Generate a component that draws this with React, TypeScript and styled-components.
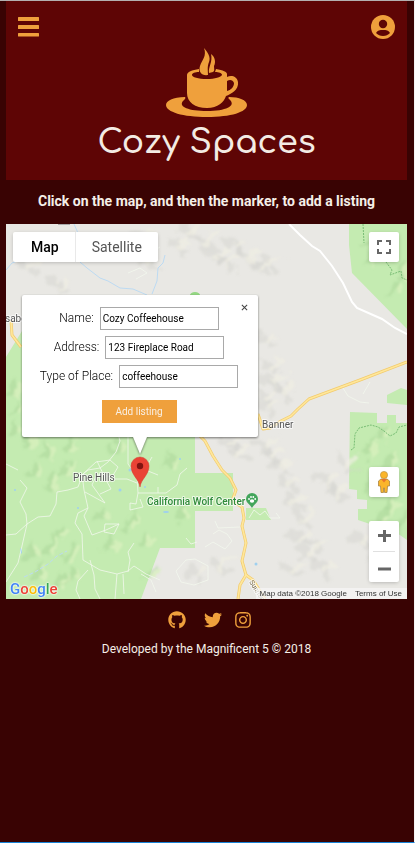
import React from "react";
import styled, { createGlobalStyle } from "styled-components";
import { FaGithub, FaTwitter, FaInstagram } from "react-icons/fa";

const GlobalStyle = createGlobalStyle`
  *, *::before, *::after { box-sizing: border-box; }
  html, body, #root { height: 100%; }
  body {
    margin: 0;
    background: #390303;
    color: #f5efe8;
    font-family: Roboto, "Liberation Sans", sans-serif;
  }
  button { font-family: inherit; cursor: pointer; }
`;

const Page = styled.div`
  min-height: 100%;
  display: flex;
  flex-direction: column;
  padding: 0 7px 0 6px;
  border-top: 1px solid #b4b0b0;
  border-right: 1px solid #f4f4f4;
  border-bottom: 1px solid #1883d7;
`;

const Header = styled.header`
  display: flex;
  flex-direction: column;
  padding: 12px 12px 16px;
  background: #5e0505;
`;

const Toolbar = styled.div`
  display: flex;
  justify-content: space-between;
  align-items: center;
  height: 27px;
`;

const IconButton = styled.button`
  display: flex;
  padding: 0;
  border: 0;
  background: none;
  color: #efa03c;
`;

const Brand = styled.div`
  display: flex;
  flex-direction: column;
  align-items: center;
  padding-top: 8px;
`;

const BrandName = styled.h1`
  margin: 4px 0 0;
  font: 600 33px/42px Comfortaa, Quicksand, Inter, sans-serif;
  color: #f3ece4;
  white-space: nowrap;
`;

const Hint = styled.h2`
  margin: 0;
  font-size: 14px;
  line-height: 20px;
  padding: 11px 0 13px;
  text-align: center;
`;

const MapArea = styled.main`
  position: relative;
  height: 375px;
  overflow: hidden;
  background: #e9e8e4;
`;

const MapDrawing = styled.svg`
  display: block;
  width: 100%;
  height: 100%;
`;

const MapTypes = styled.div`
  position: absolute;
  top: 8px;
  left: 7px;
  display: flex;
  background: #fff;
  border-radius: 2px;
  box-shadow: 0 1px 4px -1px rgba(0, 0, 0, 0.3);
`;

const MapType = styled.button<{ $active?: boolean }>`
  height: 30px;
  padding: 0 16px 0 18px;
  border: 0;
  background: none;
  font-size: 14px;
  font-weight: ${(p) => (p.$active ? 500 : 400)};
  color: ${(p) => (p.$active ? "#000" : "#565656")};
  & + & { border-left: 1px solid #e9e9e9; padding: 0 16px; }
`;

const Controls = styled.div<{ $top?: boolean }>`
  position: absolute;
  right: 8px;
  ${(p) => (p.$top ? "top: 8px;" : "bottom: 17px;")}
  display: flex;
  flex-direction: column;
  gap: 24px;
`;

const ControlCard = styled.div`
  width: 30px;
  display: flex;
  flex-direction: column;
  align-items: center;
  background: #fff;
  border-radius: 2px;
  box-shadow: 0 1px 4px -1px rgba(0, 0, 0, 0.3);
`;

const ControlButton = styled.button`
  display: flex;
  align-items: center;
  justify-content: center;
  width: 30px;
  height: 30px;
  padding: 0;
  border: 0;
  background: none;
`;

const Divider = styled.div`
  width: 22px;
  height: 1px;
  background: #e0e0e0;
`;

const Popup = styled.form`
  position: absolute;
  left: 16px;
  top: 71px;
  width: 236px;
  display: flex;
  flex-direction: column;
  align-items: center;
  gap: 6px;
  padding: 12px 11px 14px 9px;
  background: #fff;
  border-radius: 2px;
  filter: drop-shadow(0 1px 1px rgba(0, 0, 0, 0.5));
  &::after {
    content: "";
    position: absolute;
    top: 100%;
    left: 50%;
    margin-left: -7px;
    border: 7px solid transparent;
    border-bottom: 0;
    border-top: 17px solid #fff;
  }
`;

const Field = styled.label`
  display: flex;
  gap: 6px;
  font-size: 12px;
  line-height: 22px;
  font-weight: 300;
  color: #000;
  white-space: nowrap;
`;

const TextInput = styled.input`
  width: 119px;
  height: 23px;
  padding: 0 2px;
  border: 1px solid #a9a9a9;
  border-radius: 0;
  background: #fff;
  color: #000;
  font: 400 10px Roboto, sans-serif;
`;

const Submit = styled.button`
  width: 75px;
  height: 23px;
  margin-top: 6px;
  padding: 0;
  border: 0;
  background: #efa03c;
  color: #f8efe4;
  font-size: 10px;
`;

const Close = styled.button`
  position: absolute;
  top: 9px;
  right: 10px;
  display: flex;
  padding: 0;
  border: 0;
  background: none;
`;

const Attribution = styled.div`
  position: absolute;
  right: 0;
  bottom: 0;
  display: flex;
  gap: 8px;
  padding: 0 5px 0 4px;
  background: rgba(245, 245, 245, 0.75);
  font-family: "Liberation Sans", sans-serif;
  font-size: 8px;
  line-height: 11px;
  color: #333;
  a { color: inherit; text-decoration: none; }
`;

const GoogleMark = styled.a`
  position: absolute;
  left: 4px;
  bottom: 0;
  font: 500 15px/20px Roboto, sans-serif;
  text-decoration: none;
  text-shadow: 0 0 1px #fff, 0 0 2px #fff, 0 0 2px #fff;
`;

const Letter = styled.span<{ $color: string }>`
  color: ${(p) => p.$color};
`;

const Footer = styled.footer`
  display: flex;
  flex-direction: column;
  align-items: center;
  gap: 11px;
  padding-top: 12px;
  font-size: 12px;
  line-height: 18px;
`;

const Socials = styled.nav`
  display: flex;
  gap: 12px;
  padding-left: 6px;
  a { display: flex; color: #efa03c; }
  a:first-child { margin-right: 6px; }
`;

const localRoads = [
  "M6 535 L16 534 L27 524 L38 517 L50 516 L56 504 L57 492 L68 490 L78 487 L83 474 L88 470 L100 468 L108 462 L116 452 L120 441 L119 437",
  "M27 524 L22 546 L18 563 L6 582",
  "M20 480 L27 488 L20 502 L26 514 L27 524",
  "M82 474 L84 490 L88 508 L78 513 L75 523 L82 534 L83 560 L100 570 L117 574 L128 571 L134 566 L146 574 L160 580",
  "M88 508 L84 516 L92 535 L106 530 L119 524 L114 534 L104 532 L105 524 L119 524",
  "M88 570 L78 581 L76 590 L80 599",
  "M90 560 L94 575 L95 589 L100 599",
  "M117 574 L115 599 M123 574 L124 594",
  "M128 572 L130 560 L128 552 L134 543",
  "M83 474 L96 462 L110 460 L118 467 L112 477 L97 474 L92 485 L105 503 L85 492",
  "M97 461 L106 480 L111 489 L100 494",
  "M128 437 L128 464 L137 476 L138 493 L166 493 L177 485 L180 474 L187 468",
  "M111 479 L127 479 L137 483 M158 493 L158 487",
  "M138 493 L136 504 L130 503 L130 510 L143 507 L140 499",
  "M148 471 L158 475 M152 457 L148 464",
  "M186 538 L191 544 L197 542",
  "M186 560 L195 559 L208 566 L208 580 L194 585 L181 582 L176 571 Z",
  "M213 534 L219 530 L227 534 L232 541 L225 549 L213 542 L205 547",
  "M215 521 L218 528 L240 527",
  "M249 518 L254 510 L260 515 L265 511 L270 518 L280 518 L276 513",
  "M343 388 L348 396 L360 402 L369 403 M363 394 L370 382",
  "M6 464 L18 470 M141 574 L151 580 L156 592",
];

const highways = [
  "M407 362 L360 380 L309 399 L298 409 L291 416 L281 421 L270 428 L263 429 L258 414",
  "M198 434 L205 441 L213 456 L222 470 L230 478 L236 490 L232 501 L242 507 L244 518 L242 526 L246 543 L242 561 L246 575 L240 585 L238 599",
  "M246 575 L253 580 L265 599",
  "M11 320 L12 335 L21 347",
];

const ridges = [
  [205, 240], [214, 255], [226, 263], [235, 246], [248, 257], [260, 268], [270, 263],
  [188, 230], [178, 247], [142, 238], [128, 248], [148, 259], [58, 286], [28, 266],
  [265, 340], [270, 365], [275, 382], [264, 397], [282, 391], [268, 408],
  [263, 446], [272, 455], [280, 466], [287, 484], [294, 502], [303, 519], [299, 537],
  [306, 554], [315, 544], [292, 568], [336, 492], [326, 482], [360, 540], [380, 558],
  [238, 452], [229, 443], [345, 463], [322, 569], [220, 565], [196, 575],
];

const greenHills = [
  [24, 440], [42, 450], [66, 444], [29, 470], [47, 481], [61, 470], [112, 445],
  [46, 545], [58, 533], [67, 552], [29, 551], [36, 572], [56, 580], [69, 574],
  [98, 514], [126, 521], [144, 538], [168, 460], [178, 514], [148, 572], [106, 544],
  [10, 388], [14, 406], [12, 428], [365, 449], [385, 460], [378, 434], [369, 479],
  [386, 504], [400, 520], [380, 515], [366, 260], [391, 286], [398, 270], [366, 240],
];

function Terrain() {
  return (
    <MapDrawing viewBox="6 224 401 375" preserveAspectRatio="xMinYMin slice" role="img" aria-label="Map of Pine Hills and Banner">
      <defs>
        <filter id="soft" x="-10%" y="-10%" width="120%" height="120%">
          <feTurbulence type="fractalNoise" baseFrequency="0.07" numOctaves="3" seed="4" result="n" />
          <feDisplacementMap in="SourceGraphic" in2="n" scale="18" xChannelSelector="R" yChannelSelector="G" result="d" />
          <feGaussianBlur in="d" stdDeviation="1.2" />
        </filter>
      </defs>
      <rect x="6" y="224" width="401" height="375" fill="#e9e8e4" />
      <g fill="#c4ebb1">
        <path d="M22 331 L6 357 V599 H141 L160 548 H195 V511 H233 V473 H195 V400 H140 V331Z" />
        <path d="M246 508 H266 L271 520 H246Z" />
        <path d="M349 224 L349 245 L352 273 L407 329 V224Z" />
        <path d="M350 412 L377 413 V423 H387 V415 H396 V423 H407 V540 L397 533 L358 520 V509 H367 V500 L357 499 V490 L349 489Z" />
        <path d="M387 395 L401 388 L407 390 V405 L387 403Z" />
        <ellipse cx="195" cy="295" rx="5" ry="3" fill="#94d783" />
      </g>
      <g filter="url(#soft)">
        {ridges.map(([x, y], i) => (
          <React.Fragment key={i}>
            <path d={`M${x - 10} ${y - 9} l11 4 l5 7 l7 5 l-9 3 l-6 -7 l-9 -3Z`} fill="#d2d2cf" opacity="0.45" />
            <path d={`M${x + 7} ${y - 9} l7 3 l-7 5 l-6 7 l-3 -4Z`} fill="#f0eee2" opacity="0.7" />
          </React.Fragment>
        ))}
        {greenHills.map(([x, y], i) => (
          <React.Fragment key={i}>
            <path d={`M${x - 5} ${y + 8} l6 -10 l5 -8 l2 10 l-5 7Z`} fill="#a9d598" opacity="0.5" />
            <path d={`M${x + 4} ${y + 4} l6 -10 l3 6 l-5 8Z`} fill="#d8f0bd" opacity="0.8" />
          </React.Fragment>
        ))}
      </g>
      <rect x="58" y="223" width="12" height="2" fill="#aaa" />
      <g fill="none" stroke="#bcdaf2" strokeWidth="1">
        <path d="M74 224 L78 233 L76 246 L80 262 L87 268 L100 278 L108 281 L120 288 L133 289 L147 295" />
        <path d="M165 255 L163 263 L158 268 L157 281 L152 294" />
        <path d="M6 270 L12 263 L20 260" />
        <path d="M24 577 L35 572 L48 564 L57 556 L67 551" strokeDasharray="4 2" />
      </g>
      <g fill="#9fd0ef">
        <circle cx="120" cy="490" r="1.5" /><circle cx="145" cy="487" r="1" /><circle cx="180" cy="459" r="1" />
        <circle cx="78" cy="508" r="1" /><circle cx="15" cy="490" r="1" /><circle cx="256" cy="564" r="1.5" />
        <ellipse cx="166" cy="512" rx="3" ry="1" /><ellipse cx="21" cy="551" rx="1" ry="3" /><circle cx="130" cy="470" r="1.5" />
      </g>
      <g fill="none" stroke="#f3f8ed" strokeWidth="0.8" strokeLinejoin="round">
        {localRoads.map((d) => <path key={d} d={d} />)}
        <path d="M128 273 L140 268 L147 273 L136 279 M128 238 L145 243 L150 253 L160 247" />
      </g>
      <path d="M289 224 L300 235 L312 246 L320 251 L332 266 L343 283 L352 302 L357 308 L382 319 L395 328 L407 334" fill="none" stroke="#fff" strokeWidth="2" />
      <g fill="none" strokeLinejoin="round">
        {highways.map((d) => <path key={d} d={d} stroke="#f2cb6c" strokeWidth="3" />)}
        {highways.map((d) => <path key={d} d={d} stroke="#ffe79b" strokeWidth="1.6" />)}
      </g>
      <g fill="none" stroke="#79bd75" strokeWidth="1" strokeDasharray="2 1">
        <path d="M351 450 L354 448 L355 434 L359 428 L371 425 L378 427 L384 431 L390 436 L396 433 L399 427 L407 425" />
        <path d="M363 224 L364 243 M386 262 L392 270 L390 275 L401 271 L402 278 L407 280" />
      </g>
      <g fontFamily="Roboto, sans-serif" fontSize="10" fill="#555" stroke="#fff" strokeWidth="2" strokeOpacity="0.7" paintOrder="stroke" strokeLinejoin="round">
        <text x="5" y="322">sabe</text>
        <text x="73" y="481">Pine Hills</text>
        <text x="262" y="428">Banner</text>
        <text x="147" y="505" fill="#2f8a3a" fontWeight="500">California Wolf Center</text>
        <text transform="translate(249 582) rotate(58)" fontSize="7" fill="#71633f">Sunrise</text>
      </g>
      <path d="M252 508 c-2 -4 -6 -5 -6 -9 a6 6 0 0 1 12 0 c0 4 -4 5 -6 9Z" fill="#43a55b" />
      <g fill="#fff">
        <ellipse cx="252" cy="501" rx="2.2" ry="1.7" />
        <circle cx="249" cy="499" r="0.9" /><circle cx="251" cy="497" r="0.9" />
        <circle cx="253.3" cy="497" r="0.9" /><circle cx="255.2" cy="499" r="0.9" />
      </g>
      <path d="M140 487 c-1 -8 -9 -12 -9 -21 a9 9 0 0 1 18 0 c0 9 -8 13 -9 21Z" fill="#ea4335" stroke="#d33b2f" strokeWidth="0.5" />
      <circle cx="140" cy="466" r="3.2" fill="#811411" />
    </MapDrawing>
  );
}

function CupLogo() {
  return (
    <svg width="82" height="70" viewBox="0 0 82 70" fill="#efa03c" aria-hidden="true">
      <path d="M38 0 C42 5 45 9 43 14 C41 19 42 22 42 27 C36 28 32 24 34 18 C36 12 41 8 38 0Z" />
      <path d="M45 6 C49 9 50 14 48 18 C48 21 49 23 47 24 L43 25 C42 19 47 14 45 6Z" />
      <path fillRule="evenodd" d="M33 21 C26 22 21 24 21 27 V45 C21 54 29 60 41 60 C52 60 58 54 60 48 C65 46 73 42 72 34 C71 28 65 27 61 29 V26 C61 24 57 22 50 21 L49 24 C53 24 56 25 56 27 C55 29 49 31 41 31 C32 31 26 29 26 27 C26 25 29 24 33 24Z M61 33 C64 31 67 32 68 35 C68 39 65 42 61 43Z" />
      <path d="M19 49 C7 49 0 53 0 57 C0 64 17 69 41 69 C65 69 81 64 81 57 C81 52 73 49 63 49 C62 50 62 50 64 52 C70 58 60 63 41 63 C23 63 12 59 17 53 C19 51 20 50 19 49Z" />
    </svg>
  );
}

const fields = [
  { label: "Name:", value: "Cozy Coffeehouse" },
  { label: "Address:", value: "123 Fireplace Road" },
  { label: "Type of Place:", value: "coffeehouse" },
];

const markLetters: [string, string][] = [
  ["G", "#4285f4"], ["o", "#ea4335"], ["o", "#fbbc05"],
  ["g", "#4285f4"], ["l", "#34a853"], ["e", "#ea4335"],
];

export default function App() {
  return (
    <>
      <GlobalStyle />
      <Page>
        <Header>
          <Toolbar>
            <IconButton aria-label="Menu">
              <svg width="21" height="20" viewBox="0 0 21 20" fill="currentColor">
                <rect y="0" width="21" height="4" rx="0.5" />
                <rect y="8" width="21" height="4" rx="0.5" />
                <rect y="16" width="21" height="3.5" rx="0.5" />
              </svg>
            </IconButton>
            <IconButton aria-label="Account">
              <svg width="24" height="24" viewBox="0 0 24 24">
                <circle cx="12" cy="12" r="12" fill="currentColor" />
                <circle cx="12" cy="9" r="4.2" fill="#5e0505" />
                <path d="M5 18 C6 15.500 9 15 12 15 C15 15 18 15.500 19 18 C17 20 15 21 12 21 C9 21 7 20 5 18Z" fill="#5e0505" />
              </svg>
            </IconButton>
          </Toolbar>
          <Brand>
            <CupLogo />
            <BrandName>Cozy Spaces</BrandName>
          </Brand>
        </Header>
        <Hint>Click on the map, and then the marker, to add a listing</Hint>
        <MapArea>
          <Terrain />
          <MapTypes>
            <MapType $active>Map</MapType>
            <MapType>Satellite</MapType>
          </MapTypes>
          <Controls $top>
            <ControlCard>
              <ControlButton aria-label="Fullscreen">
                <svg width="14" height="14" viewBox="0 0 14 14" fill="none" stroke="#666" strokeWidth="2">
                  <path d="M1 5V1H5 M9 1H13V5 M13 9V13H9 M5 13H1V9" />
                </svg>
              </ControlButton>
            </ControlCard>
          </Controls>
          <Controls>
            <ControlCard>
              <ControlButton aria-label="Street View">
                <svg width="14" height="22" viewBox="0 0 14 22">
                  <path d="M4 8 H10 L12.500 10 V15 H10.500 L10 21.500 H7.500 V17 H6.500 V21.500 H4 L3.500 15 H1.500 V10Z" fill="#fbb52a" stroke="#a98543" strokeWidth="0.8" />
                  <circle cx="7" cy="4" r="3.600" fill="#fbb52a" stroke="#b48a3b" strokeWidth="0.6" />
                  <path d="M4 8 L10 8 L7 11.500Z" fill="#e8742c" />
                </svg>
              </ControlButton>
            </ControlCard>
            <ControlCard>
              <ControlButton aria-label="Zoom in">
                <svg width="13" height="13" viewBox="0 0 13 13" stroke="#666" strokeWidth="3"><path d="M0 5.500H13M6.500 0V12" /></svg>
              </ControlButton>
              <Divider />
              <ControlButton aria-label="Zoom out">
                <svg width="13" height="13" viewBox="0 0 13 13" stroke="#666" strokeWidth="3"><path d="M0 8H13" /></svg>
              </ControlButton>
            </ControlCard>
          </Controls>
          <Popup onSubmit={(e) => e.preventDefault()}>
            {fields.map((f) => (
              <Field key={f.label}>
                {f.label}
                <TextInput type="text" defaultValue={f.value} />
              </Field>
            ))}
            <Submit type="submit">Add listing</Submit>
            <Close type="button" aria-label="Close">
              <svg width="7" height="7" viewBox="0 0 8 8" stroke="#444" strokeWidth="1.2"><path d="M1 1L7 7M7 1L1 7" /></svg>
            </Close>
          </Popup>
          <GoogleMark href="#google" aria-label="Google">
            {markLetters.map(([c, color], i) => <Letter key={i} $color={color}>{c}</Letter>)}
          </GoogleMark>
          <Attribution>
            <span>Map data ©2018 Google</span>
            <a href="#terms">Terms of Use</a>
          </Attribution>
        </MapArea>
        <Footer>
          <Socials>
            <a href="#github" aria-label="GitHub"><FaGithub size={18} /></a>
            <a href="#twitter" aria-label="Twitter"><FaTwitter size={18} /></a>
            <a href="#instagram" aria-label="Instagram"><FaInstagram size={18} /></a>
          </Socials>
          <span>Developed by the Magnificent 5 © 2018</span>
        </Footer>
      </Page>
    </>
  );
}
